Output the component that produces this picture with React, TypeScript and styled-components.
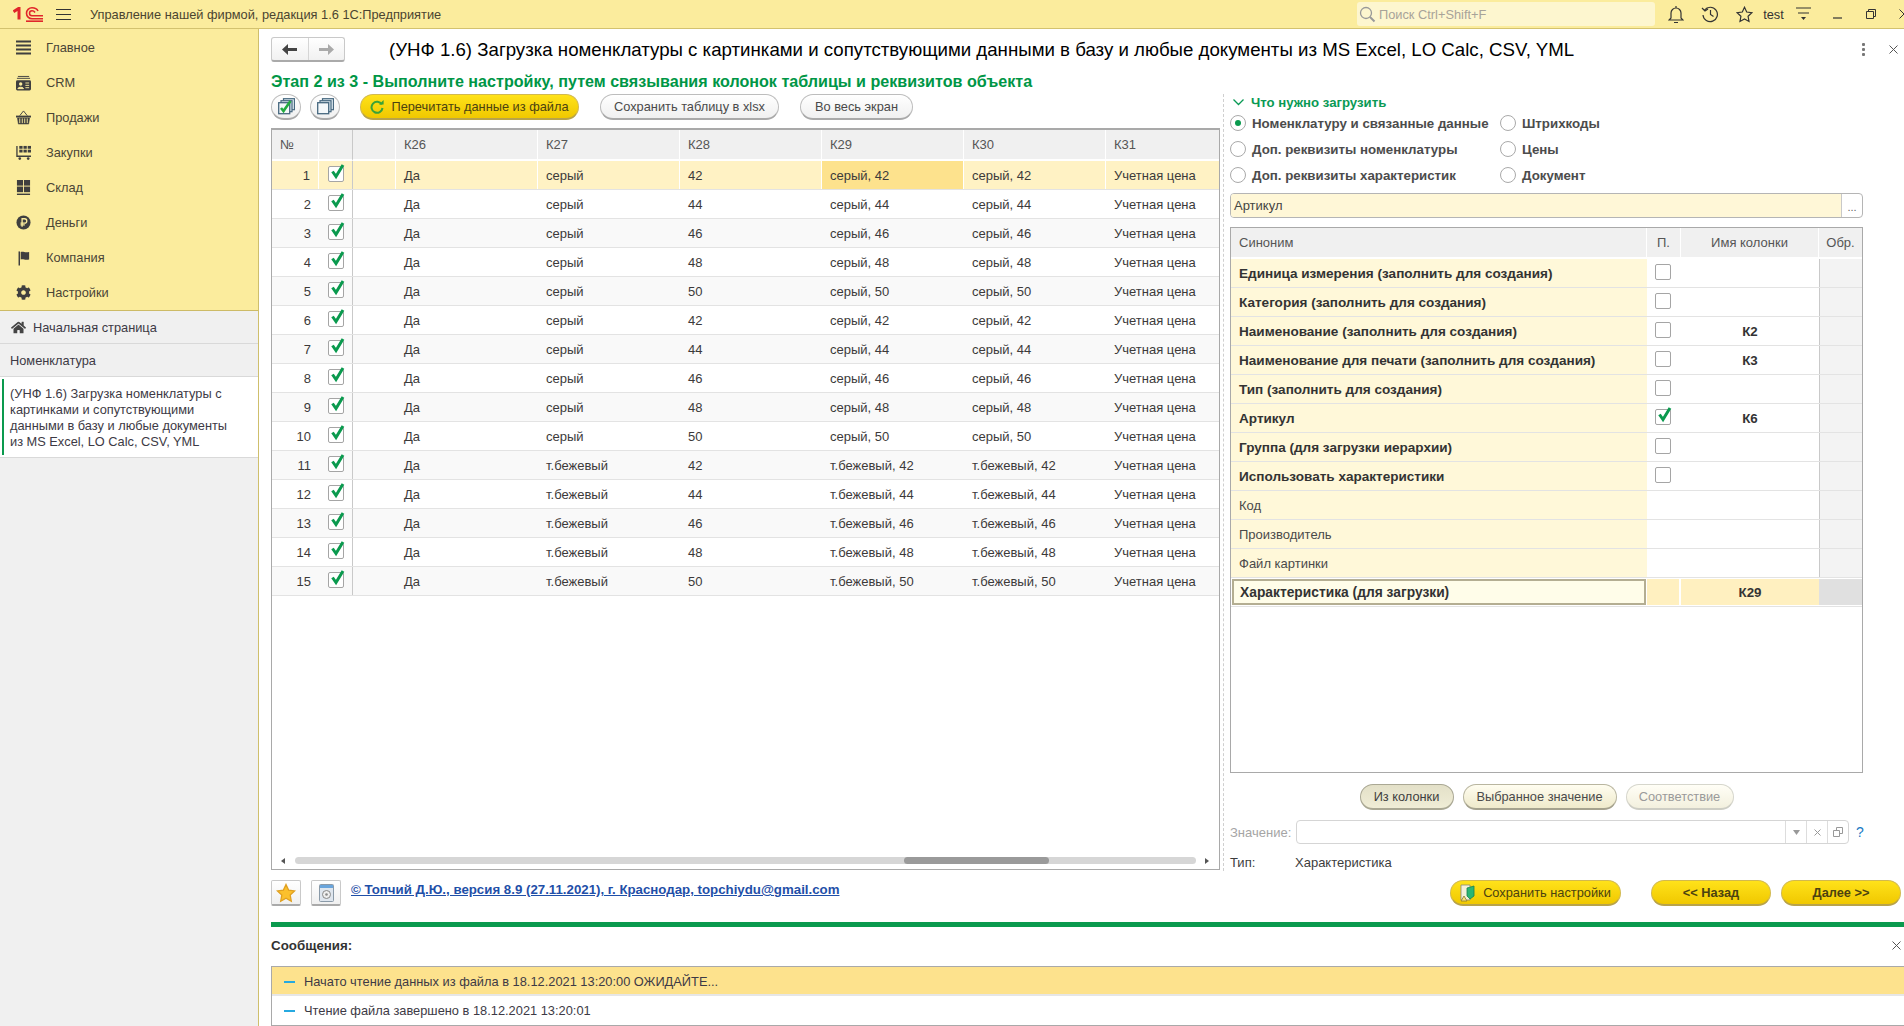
import React from "react";
import styled, { createGlobalStyle, css } from "styled-components";
import { FaHome, FaCog } from "react-icons/fa";

const Global = createGlobalStyle`
  html, body { margin: 0; padding: 0; background: #fff; }
  body { font-family: "Liberation Sans", Arial, sans-serif; font-size: 13px; color: #333; overflow: hidden; }
  * { box-sizing: border-box; }
`;

const Page = styled.div`
  width: 1904px; height: 1026px; display: flex; flex-direction: column; overflow: hidden;
`;
const TopBar = styled.header`
  height: 29px; flex: none; background: #fbec9d; border-bottom: 1px solid #d3c26f;
  display: flex; align-items: center; position: relative; font-size: 12.8px;
`;
const LogoBox = styled.div`
  width: 43px; margin-left: 13px; display: flex; align-items: center; flex: none;
`;
const Burger = styled.div`
  width: 15px; height: 11px; display: flex; flex-direction: column; justify-content: space-between;
  i { display: block; height: 1px; background: #333; }
`;
const AppTitle = styled.div`
  margin-left: 19px; color: #4a4430; white-space: nowrap;
`;
const Search = styled.div`
  margin-left: auto; width: 298px; height: 24px; background: #fdf6cf; border-radius: 3px; flex: none;
  display: flex; align-items: center; padding-left: 2px; color: #a8a399; gap: 3px; white-space: nowrap;
`;
const TopIcons = styled.div`
  display: flex; align-items: center; width: 249px; height: 28px; padding-left: 10px; flex: none;
`;
const TopIcon = styled.span<{ $w: number }>`
  width: ${(p) => p.$w}px; display: flex; justify-content: center; align-items: center; flex: none;
`;

const Body = styled.div`
  flex: 1; display: flex; min-height: 0;
`;
const Side = styled.aside`
  width: 259px; flex: none; background: #f0f0f0; border-right: 1px solid #cfbf6c; display: flex; flex-direction: column; font-size: 12.8px;
`;
const Nav = styled.nav`
  height: 282px; background: #fbec9d; border-bottom: 1px solid #cdbb66; padding-top: 1px;
`;
const NavItem = styled.div`
  height: 35px; display: flex; align-items: center; padding-left: 16px; gap: 15px; color: #4a4536;
  svg { flex: none; }
`;
const HomeRow = styled.div`
  height: 33px; display: flex; align-items: center; padding-left: 11px; gap: 7px; color: #3d3a45; border-bottom: 1px solid #d9d9d9;
`;
const PlainRow = styled.div`
  height: 33px; display: flex; align-items: center; padding-left: 10px; color: #3d3a45; border-bottom: 1px solid #d9d9d9;
`;
const ActiveRow = styled.div`
  height: 81px; background: #fff; border-bottom: 1px solid #d9d9d9; padding: 2px 20px 0 10px; position: relative;
  color: #3d3a45; line-height: 16px; display: flex; align-items: center;
  &::before { content: ""; position: absolute; left: 2px; top: 2px; bottom: 2px; width: 2px; background: #0a9a4e; }
`;

const Main = styled.main`
  flex: 1; min-width: 0; display: flex; flex-direction: column; padding-left: 12px;
`;
const Head = styled.div`
  height: 25px; margin-top: 8px; display: flex; align-items: center; flex: none;
`;
const NavPair = styled.div`
  width: 74px; height: 25px; display: flex; border: 1px solid #c9c9c9; border-bottom: 2px solid #aaa; border-radius: 3px;
  background: linear-gradient(#fff, #f1f1f1);
`;
const NavBtn = styled.div<{ $line?: boolean }>`
  flex: 1; display: flex; align-items: center; justify-content: center;
  ${(p) => p.$line && css`border-right: 1px solid #d5d5d5;`}
`;
const FormTitle = styled.h1`
  margin: 0 0 0 44px; font-weight: 400; font-size: 18.67px; color: #000; white-space: nowrap; line-height: 24px;
`;
const HeadRight = styled.div`
  margin-left: auto; display: flex; align-items: center; padding-right: 6px; gap: 24px;
`;
const Kebab = styled.div`
  display: flex; flex-direction: column; gap: 2px;
  i { width: 3px; height: 3px; background: #777; display: block; border-radius: 1px; }
`;
const Stage = styled.div`
  margin-top: 10px; height: 18px; line-height: 18px; font-size: 16.12px; font-weight: 700; color: #009646; white-space: nowrap; flex: none;
`;
const Work = styled.div`
  margin-top: 4px; height: 777px; display: flex; flex: none;
`;
const LeftCol = styled.section`
  width: 949px; flex: none; display: flex; flex-direction: column;
`;
const Toolbar = styled.div`
  height: 26px; display: flex; align-items: center; flex: none; margin-bottom: 8px;
`;
const Pill = styled.button<{ $kind?: "yellow" | "grey" | "cream" | "pressed" | "off"; $w?: number; $ml?: number }>`
  height: 26px; flex: none; border-radius: 13px; font: inherit; font-size: 12.8px; display: flex; align-items: center; justify-content: center; gap: 7px; padding: 0;
  width: ${(p) => (p.$w ? `${p.$w}px` : "auto")}; margin-left: ${(p) => p.$ml ?? 0}px;
  border: 1px solid #bdbdbd; border-bottom: 2px solid #a9a9a9; color: #4a4a4a;
  background: linear-gradient(#fff, #f0f0f0);
  ${(p) => p.$kind === "yellow" && css`
    border-color: #d2b94e; border-bottom-color: #b8a34a; color: #4b4210; background: linear-gradient(#ffe21a, #f0c800);
  `}
  ${(p) => p.$kind === "cream" && css`
    background: linear-gradient(#fffdf0, #efeacb); border-color: #b9b6a0; border-bottom-color: #a5a28e;
  `}
  ${(p) => p.$kind === "pressed" && css`
    background: linear-gradient(#e3e0c8, #f0edd6); border-color: #aaa894; color: #3e3e3e;
  `}
  ${(p) => p.$kind === "off" && css`
    background: linear-gradient(#fffef6, #f3f0de); border-color: #d6d6cc; border-bottom-color: #cdcdc4; color: #9a9a9a;
  `}
`;
const Grid = styled.div`
  height: 742px; flex: none; border: 1px solid #a9a9a9; border-top-width: 2px; position: relative; overflow: hidden; background: #fff;
`;
const cols = "47px 34px 43px repeat(6, 142px)";
const HeadRowEl = styled.div`
  display: grid; grid-template-columns: ${cols}; height: 31px;
`;
const HeadCell = styled.div<{ $sep?: boolean }>`
  background: #f0f0f0; border-right: 1px solid #fff; border-bottom: 2px solid #fff; padding: 0 8px; display: flex; align-items: center; color: #555;
  ${(p) => p.$sep && css`border-right: 1px solid #c9c9c9;`}
`;
const RowEl = styled.div<{ $alt?: boolean; $sel?: boolean }>`
  display: grid; grid-template-columns: ${cols}; height: 29px; border-bottom: 1px solid #e3e3e3;
  background: ${(p) => (p.$sel ? "#fff2c4" : p.$alt ? "#f9f9f9" : "#fff")};
`;
const Cell = styled.div<{ $right?: boolean; $sep?: boolean; $cur?: boolean; $sel?: boolean }>`
  padding: 0 8px; display: flex; align-items: center; color: #3c3a3a; white-space: nowrap; overflow: hidden;
  ${(p) => p.$right && css`justify-content: flex-end;`}
  ${(p) => p.$sel && css`border-right: 1px solid #fff;`}
  ${(p) => p.$sep && css`border-right: 1px solid #c9c9c9;`}
  ${(p) => p.$cur && css`background: #fde28d;`}
`;
const ChkCell = styled(Cell)`
  padding: 0 0 2px 9px; overflow: visible;
`;
const Box = styled.span`
  width: 16px; height: 16px; display: block; border: 1px solid #a5a5a5; border-radius: 2px; background: #fff; position: relative; flex: none;
  svg { position: absolute; left: 1px; top: -3px; overflow: visible; }
`;
const HScroll = styled.div`
  position: absolute; left: 0; right: 0; bottom: 0; height: 17px; display: flex; align-items: center; background: #fff;
`;
const Arrow = styled.span<{ $r?: boolean }>`
  width: 0; height: 0; border-top: 3px solid transparent; border-bottom: 3px solid transparent; flex: none;
  ${(p) => (p.$r ? css`border-left: 4px solid #555; margin: 0 10px 0 9px;` : css`border-right: 4px solid #555; margin: 0 10px 0 9px;`)}
`;
const Track = styled.div`
  flex: 1; height: 7px; background: #d6d6d6; border-radius: 4px; position: relative;
`;
const Thumb = styled.div`
  position: absolute; left: 609px; width: 145px; top: 0; bottom: 0; background: #9a9a9a; border-radius: 4px;
`;
const RightCol = styled.section`
  width: 640px; margin-left: 3px; flex: none; padding-left: 6px; border-left: 1px dashed #cfcfcf; display: flex; flex-direction: column;
`;
const Group = styled.div`
  height: 15px; line-height: 15px; margin-top: 1px; display: flex; align-items: center; gap: 7px; padding-left: 3px; color: #0a9a55; font-weight: 700; font-size: 13.2px; flex: none;
`;
const Radios = styled.div`
  display: grid; grid-template-columns: 270px 1fr; grid-auto-rows: 26px; flex: none;
`;
const RadioItem = styled.label`
  display: flex; align-items: center; gap: 6px; font-weight: 700; color: #4c4c4c; white-space: nowrap; font-size: 13.3px;
`;
const RadioDot = styled.span<{ $on?: boolean }>`
  width: 16px; height: 16px; border-radius: 50%; border: 1px solid #a9a9a9; background: #fff; flex: none; display: flex; align-items: center; justify-content: center;
  &::after { content: ""; width: 6px; height: 6px; border-radius: 50%; background: ${(p) => (p.$on ? "#0a9a4e" : "transparent")}; }
`;
const TextInput = styled.div`
  margin-top: 5px; height: 25px; width: 633px; display: flex; border: 1px solid #b5b5b5; border-radius: 4px; overflow: hidden; background: #fff; flex: none;
`;
const InputValue = styled.div`
  flex: 1; background: #fff7d7; padding-left: 3px; display: flex; align-items: center; color: #444;
`;
const InputBtn = styled.div`
  width: 21px; border-left: 1px solid #c9c9c9; display: flex; justify-content: center; align-items: flex-end; padding-bottom: 5px; color: #666; font-size: 11px; line-height: 10px;
`;
const SynTable = styled.div`
  margin-top: 9px; width: 633px; height: 546px; border: 1px solid #a9a9a9; flex: none; overflow: hidden;
`;
const synCols = "416px 34px 138px 44px";
const SynHead = styled.div`
  display: grid; grid-template-columns: ${synCols}; height: 31px;
`;
const SynHeadCell = styled.div<{ $center?: boolean }>`
  background: #f0f0f0; border-right: 1px solid #fff; border-bottom: 2px solid #fff; display: flex; align-items: center; color: #555;
  padding-left: ${(p) => (p.$center ? 0 : 8)}px; justify-content: ${(p) => (p.$center ? "center" : "flex-start")};
`;
const SynRowEl = styled.div`
  display: grid; grid-template-columns: ${synCols}; height: 29px; border-bottom: 1px solid #e3e3e3;
`;
const SynName = styled.div<{ $bold?: boolean }>`
  background: #fff8d9; padding-left: 8px; display: flex; align-items: center; white-space: nowrap; color: ${(p) => (p.$bold ? "#333" : "#4a4a4a")}; font-weight: ${(p) => (p.$bold ? 700 : 400)}; font-size: ${(p) => (p.$bold ? "13.55px" : "13px")};
`;
const SynCur = styled(SynName)`
  background: #fffde9; border: 2px solid #b4ae92; padding-left: 6px; margin: 1px 1px 1px 1px; font-weight: 700; font-size: 13.8px; color: #333;
`;
const SynChk = styled.div<{ $sel?: boolean }>`
  display: flex; align-items: center; padding: 0 0 2px 8px;
  ${(p) => p.$sel && css`background: #fff0c0; border-right: 2px solid #fff; margin: 1px 0;`}
`;
const SynCol = styled.div<{ $sel?: boolean }>`
  display: flex; align-items: center; justify-content: center; font-weight: 700; color: #333; font-size: 13.33px;
  ${(p) => p.$sel && css`background: #fff0c0; margin: 1px 0;`}
`;
const SynObr = styled.div<{ $sel?: boolean }>`
  background: ${(p) => (p.$sel ? "#e0e0e0" : "#f3f3f3")}; border-left: 1px solid #c9c9c9;
  ${(p) => p.$sel && css`margin: 1px 0; border-left: 0;`}
`;
const ModeRow = styled.div`
  margin-top: 11px; width: 633px; display: flex; justify-content: center; gap: 9px; flex: none;
`;
const ValueRow = styled.div`
  margin-top: 10px; height: 24px; display: flex; align-items: center; flex: none; color: #a5a5a5;
`;
const ValueLabel = styled.div`
  width: 66px; flex: none;
`;
const ValueField = styled.div`
  width: 553px; height: 24px; display: flex; border: 1px solid #d5d5d5; border-radius: 4px; flex: none;
`;
const ValueGrow = styled.div`flex: 1;`;
const ValueBtn = styled.div`
  width: 21px; border-left: 1px solid #ddd; display: flex; align-items: center; justify-content: center; color: #999;
`;
const Help = styled.div`
  margin-left: 7px; color: #1a7ac4; font-weight: 400; font-size: 14px;
`;
const TypeRow = styled.div`
  margin-top: 9px; height: 18px; display: flex; align-items: center; color: #3d3d3d; flex: none;
`;
const TypeLabel = styled.div`width: 65px; flex: none;`;
const Footer = styled.div`
  margin-top: 9px; height: 26px; display: flex; flex: none; position: relative; padding-right: 3px;
`;
const SquareBtn = styled.div<{ $ml?: number }>`
  width: 30px; height: 26px; flex: none; margin-left: ${(p) => p.$ml ?? 0}px; border: 1px solid #c9c9c9; border-bottom: 2px solid #aaa; border-radius: 2px;
  background: linear-gradient(#fff, #f0f0f0); display: flex; align-items: center; justify-content: center;
`;
const LinkText = styled.a`
  margin-left: 10px; color: #1f4fa8; font-weight: 700; font-size: 13.27px; text-decoration: underline; line-height: 20px; height: 20px; white-space: nowrap;
`;
const FooterRight = styled.div`
  margin-left: auto; display: flex; align-items: center;
`;
const GreenBar = styled.div`
  margin-top: 16px; height: 5px; background: #0a9a4e; flex: none;
`;
const MsgHead = styled.div`
  height: 39px; padding: 0 3px 3px 0; display: flex; align-items: center; justify-content: space-between; flex: none; font-weight: 700; color: #333; font-size: 13.33px;
`;
const MsgBox = styled.div`
  height: 60px; border: 1px solid #a9a9a9; border-right: 0; flex: none; font-size: 12.84px;
`;
const MsgRow = styled.div<{ $sel?: boolean }>`
  height: 29px; display: flex; align-items: center; padding-left: 12px; gap: 9px; color: #3d3a45;
  background: ${(p) => (p.$sel ? "#fde28d" : "#fff")};
  ${(p) => p.$sel && css`border-bottom: 2px solid #e6e6e6; padding-top: 2px;`}
  &::before { content: ""; width: 11px; height: 2px; background: #26a9e0; flex: none; }
`;

const Check = () => (
  <svg width="17" height="18" viewBox="0 0 17 18"><path d="M2.5 7.5 L6 12.5 L13 1" fill="none" stroke="#0a9a4e" strokeWidth="3" /></svg>
);

const ic = "#3f3f3f";
const navItems: [string, React.ReactNode][] = [
  ["Главное", <svg width="15" height="15" viewBox="0 0 15 15"><path d="M0 1.5h15M0 5.5h15M0 9.5h15M0 13.5h15" stroke={ic} strokeWidth="2" /></svg>],
  ["CRM", <svg width="15" height="16" viewBox="0 0 16 16"><path d="M2 1h12M1 3h14" stroke={ic} strokeWidth="1" /><rect x="0" y="5" width="16" height="11" rx="1.5" fill={ic} /><circle cx="5" cy="9" r="1.8" fill="#fbec9d" /><path d="M2 14c0-2 6-2 6 0zM10 8h4M10 10.5h4M10 13h4" fill="#fbec9d" stroke="#fbec9d" strokeWidth="1" /></svg>],
  ["Продажи", <svg width="15" height="15" viewBox="0 0 16 16"><path d="M4 6 L8 1 L12 6" fill="none" stroke={ic} /><rect x="0" y="6" width="16" height="2" fill={ic} /><path d="M1.5 8.5h13l-1 6.5h-11z" fill={ic} stroke={ic} strokeWidth=".5" /><path d="M4 9v5M6.7 9v5M9.3 9v5M12 9v5" stroke="#fbec9d" strokeWidth="1" /></svg>],
  ["Закупки", <svg width="15" height="15" viewBox="0 0 16 16"><path d="M1 1v11h15" fill="none" stroke={ic} strokeWidth="1.4" /><rect x="3.5" y="1" width="3.5" height="3" fill={ic} /><rect x="8" y="1" width="3.5" height="3" fill={ic} /><rect x="12.5" y="1" width="3.5" height="3" fill={ic} /><rect x="3.5" y="5" width="3.5" height="3" fill={ic} /><rect x="8" y="5" width="3.5" height="3" fill={ic} /><rect x="12.5" y="5" width="3.5" height="3" fill={ic} /><circle cx="4" cy="14.5" r="1.4" fill={ic} /><circle cx="13" cy="14.5" r="1.4" fill={ic} /></svg>],
  ["Склад", <svg width="15" height="15" viewBox="0 0 16 16"><rect x="1" y="0" width="6.5" height="6" fill={ic} /><rect x="8.5" y="0" width="6.5" height="6" fill={ic} /><rect x="1" y="7" width="6.5" height="6" fill={ic} /><rect x="8.5" y="7" width="6.5" height="6" fill={ic} /><rect x="1" y="14.5" width="14" height="1.5" fill={ic} /></svg>],
  ["Деньги", <svg width="15" height="15" viewBox="0 0 16 16"><circle cx="8" cy="8" r="7.5" fill={ic} /><path d="M6.5 12.5V4h2.7a2.3 2.3 0 0 1 0 4.6H4.8M4.8 10.6h4.6" fill="none" stroke="#fbec9d" strokeWidth="1.4" /></svg>],
  ["Компания", <svg width="15" height="16" viewBox="0 0 16 16"><path d="M3.5 1v15" stroke={ic} strokeWidth="1.6" /><path d="M5 1.5c3-1 4 1 9 0v8c-5 1-6-1-9 0z" fill={ic} /></svg>],
  ["Настройки", <FaCog size={15} color={ic} />],
];

const sizes = [42, 44, 46, 48, 50];
const rows = Array.from({ length: 15 }, (_, i) => ({
  n: i + 1,
  color: i < 10 ? "серый" : "т.бежевый",
  size: sizes[i % 5],
}));

const syn: { t: string; bold?: boolean; chk?: boolean; on?: boolean; col?: string }[] = [
  { t: "Единица измерения (заполнить для создания)", bold: true, chk: true },
  { t: "Категория (заполнить для создания)", bold: true, chk: true },
  { t: "Наименование (заполнить для создания)", bold: true, chk: true, col: "К2" },
  { t: "Наименование для печати (заполнить для создания)", bold: true, chk: true, col: "К3" },
  { t: "Тип (заполнить для создания)", bold: true, chk: true },
  { t: "Артикул", bold: true, chk: true, on: true, col: "К6" },
  { t: "Группа (для загрузки иерархии)", bold: true, chk: true },
  { t: "Использовать характеристики", bold: true, chk: true },
  { t: "Код" },
  { t: "Производитель" },
  { t: "Файл картинки" },
];

const Star = ({ filled }: { filled?: boolean }) => (
  <svg width="20" height="20" viewBox="0 0 20 20">
    <path d="M10 1.5l2.6 5.6 6 .8-4.4 4.2 1.1 6.1L10 15.2l-5.3 3 1.1-6.1L1.4 7.9l6-.8z" fill={filled ? "#fbc02d" : "none"} stroke={filled ? "#e0a020" : "#444"} strokeWidth="1.3" />
  </svg>
);

const Stack = ({ checked }: { checked?: boolean }) => (
  <svg width="17" height="17" viewBox="0 0 17 17">
    <rect x="5.5" y=".7" width="11" height="11" fill="#dce8f0" stroke="#47687f" strokeWidth="1.2" />
    <rect x="3" y="2.7" width="11" height="11" fill="#dce8f0" stroke="#47687f" strokeWidth="1.2" />
    <rect x=".7" y="4.7" width="11" height="11" fill="#f4f8fa" stroke="#47687f" strokeWidth="1.3" />
    {checked && <path d="M3 10l2.5 3L12.5 3" fill="none" stroke="#22ab3f" strokeWidth="2.6" />}
  </svg>
);

export default function App() {
  return (
    <Page>
      <Global />
      <TopBar>
        <LogoBox>
          <svg width="30" height="15" viewBox="0 0 30 15">
            <path d="M.5 4.8 L6 1.2 V12.5" fill="none" stroke="#e0262b" strokeWidth="3" />
            <path d="M25 4C24 1.8 21.5.8 19 .8a5.5 5.5 0 0 0 0 11H30" fill="none" stroke="#e0262b" strokeWidth="1.6" />
            <path d="M22 5.5C21.3 4.3 20 3.8 19 3.8a2.5 2.5 0 0 0 0 5H30" fill="none" stroke="#e0262b" strokeWidth="1.5" />
            <path d="M13 14.2H30" stroke="#e0262b" strokeWidth="1.6" />
          </svg>
        </LogoBox>
        <Burger><i /><i /><i /></Burger>
        <AppTitle>Управление нашей фирмой, редакция 1.6 1С:Предприятие</AppTitle>
        <Search>
          <svg width="17" height="17" viewBox="0 0 17 17"><circle cx="7" cy="7" r="5.5" fill="none" stroke="#999" strokeWidth="1.3" /><path d="M11 11l4.5 4.5" stroke="#999" strokeWidth="2" /></svg>
          Поиск Ctrl+Shift+F
        </Search>
        <TopIcons>
          <TopIcon $w={22}><svg width="16" height="19" viewBox="0 0 16 19"><path d="M3 13V8a5 5 0 0 1 10 0v5l2 2H1zM8 1v2M6 17.5h4" fill="none" stroke="#333" strokeWidth="1.2" /></svg></TopIcon>
          <TopIcon $w={12} />
          <TopIcon $w={22}><svg width="18" height="18" viewBox="0 0 18 18"><path d="M3.5 5a7.2 7.2 0 1 1-1.5 5M1 3l3 3 3-2M9.5 5v4.5l3 2" fill="none" stroke="#333" strokeWidth="1.2" /></svg></TopIcon>
          <TopIcon $w={12} />
          <TopIcon $w={22}><svg width="17" height="17" viewBox="0 0 20 20"><path d="M10 1.5l2.6 5.6 6 .8-4.4 4.2 1.1 6.1L10 15.2l-5.3 3 1.1-6.1L1.4 7.9l6-.8z" fill="none" stroke="#333" strokeWidth="1.4" /></svg></TopIcon>
          <TopIcon $w={37}>test</TopIcon>
          <TopIcon $w={22}><svg width="15" height="14" viewBox="0 0 15 14"><path d="M0 1h15M2 6h11" stroke="#333" strokeWidth="1.2" /><path d="M5 10h5l-2.5 3z" fill="#333" /></svg></TopIcon>
          <TopIcon $w={18} />
          <TopIcon $w={12}><svg width="10" height="10" viewBox="0 0 10 10"><path d="M0 9h9" stroke="#333" strokeWidth="1.2" /></svg></TopIcon>
          <TopIcon $w={21} />
          <TopIcon $w={12}><svg width="10" height="10" viewBox="0 0 10 10"><path d="M.5 2.5h7v7h-7zM2.5 2.5v-2h7v7h-2" fill="none" stroke="#333" /></svg></TopIcon>
          <TopIcon $w={22} />
          <TopIcon $w={10}><svg width="10" height="10" viewBox="0 0 10 10"><path d="M.5.5l9 9M9.5.5l-9 9" stroke="#333" /></svg></TopIcon>
        </TopIcons>
      </TopBar>
      <Body>
        <Side>
          <Nav>
            {navItems.map(([t, i]) => (
              <NavItem key={t}>{i}<span>{t}</span></NavItem>
            ))}
          </Nav>
          <HomeRow><FaHome size={15} color="#444" />Начальная страница</HomeRow>
          <PlainRow>Номенклатура</PlainRow>
          <ActiveRow>
            <span>(УНФ 1.6) Загрузка номенклатуры с картинками и сопутствующими данными в базу и любые документы из MS Excel, LO Calc, CSV, YML</span>
          </ActiveRow>
        </Side>
        <Main>
          <Head>
            <NavPair>
              <NavBtn $line><svg width="15" height="11" viewBox="0 0 15 11"><path d="M0 5.5L6 0v4h9v3H6v4z" fill="#444" /></svg></NavBtn>
              <NavBtn><svg width="15" height="11" viewBox="0 0 15 11"><path d="M15 5.5L9 0v4H0v3h9v4z" fill="#aaa" /></svg></NavBtn>
            </NavPair>
            <FormTitle>(УНФ 1.6) Загрузка номенклатуры с картинками и сопутствующими данными в базу и любые документы из MS Excel, LO Calc, CSV, YML</FormTitle>
            <HeadRight>
              <Kebab><i /><i /><i /></Kebab>
              <svg width="9" height="9" viewBox="0 0 9 9"><path d="M.5.5l8 8M8.5.5l-8 8" stroke="#555" /></svg>
            </HeadRight>
          </Head>
          <Stage>Этап 2 из 3 - Выполните настройку, путем связывания колонок таблицы и реквизитов объекта</Stage>
          <Work>
            <LeftCol>
              <Toolbar>
                <Pill $w={30}><Stack checked /></Pill>
                <Pill $w={30} $ml={9}><Stack /></Pill>
                <Pill $kind="yellow" $w={219} $ml={20}>
                  <svg width="14" height="14" viewBox="0 0 14 14"><path d="M11.8 4.5A5.5 5.5 0 1 0 12.5 8" fill="none" stroke="#3aa238" strokeWidth="2" /><path d="M9 4.6h4.6V0z" fill="#3aa238" /></svg>
                  Перечитать данные из файла
                </Pill>
                <Pill $w={179} $ml={21}>Сохранить таблицу в xlsx</Pill>
                <Pill $w={113} $ml={21}>Во весь экран</Pill>
              </Toolbar>
              <Grid>
                <HeadRowEl>
                  <HeadCell>№</HeadCell>
                  <HeadCell $sep />
                  <HeadCell />
                  {["К26", "К27", "К28", "К29", "К30", "К31"].map((h) => <HeadCell key={h}>{h}</HeadCell>)}
                </HeadRowEl>
                {rows.map((r, i) => {
                  const sel = i === 0;
                  const v = `${r.color}, ${r.size}`;
                  return (
                    <RowEl key={r.n} $sel={sel} $alt={i % 2 === 0}>
                      <Cell $right $sel={sel}>{r.n}</Cell>
                      <ChkCell $sep><Box><Check /></Box></ChkCell>
                      <Cell $sel={sel} />
                      <Cell $sel={sel}>Да</Cell>
                      <Cell $sel={sel}>{r.color}</Cell>
                      <Cell $sel={sel}>{r.size}</Cell>
                      <Cell $sel={sel} $cur={sel}>{v}</Cell>
                      <Cell $sel={sel}>{v}</Cell>
                      <Cell>Учетная цена</Cell>
                    </RowEl>
                  );
                })}
                <HScroll>
                  <Arrow />
                  <Track><Thumb /></Track>
                  <Arrow $r />
                </HScroll>
              </Grid>
            </LeftCol>
            <RightCol>
              <Group>
                <svg width="11" height="7" viewBox="0 0 11 7"><path d="M.5.5l5 5 5-5" fill="none" stroke="#0a9a55" strokeWidth="1.3" /></svg>
                Что нужно загрузить
              </Group>
              <Radios>
                <RadioItem><RadioDot $on />Номенклатуру и связанные данные</RadioItem>
                <RadioItem><RadioDot />Штрихкоды</RadioItem>
                <RadioItem><RadioDot />Доп. реквизиты номенклатуры</RadioItem>
                <RadioItem><RadioDot />Цены</RadioItem>
                <RadioItem><RadioDot />Доп. реквизиты характеристик</RadioItem>
                <RadioItem><RadioDot />Документ</RadioItem>
              </Radios>
              <TextInput>
                <InputValue>Артикул</InputValue>
                <InputBtn>...</InputBtn>
              </TextInput>
              <SynTable>
                <SynHead>
                  <SynHeadCell>Синоним</SynHeadCell>
                  <SynHeadCell $center>П.</SynHeadCell>
                  <SynHeadCell $center>Имя колонки</SynHeadCell>
                  <SynHeadCell $center>Обр.</SynHeadCell>
                </SynHead>
                {syn.map((s) => (
                  <SynRowEl key={s.t}>
                    <SynName $bold={s.bold}>{s.t}</SynName>
                    <SynChk>{s.chk && <Box>{s.on && <Check />}</Box>}</SynChk>
                    <SynCol>{s.col}</SynCol>
                    <SynObr />
                  </SynRowEl>
                ))}
                <SynRowEl>
                  <SynCur>Характеристика (для загрузки)</SynCur>
                  <SynChk $sel />
                  <SynCol $sel>К29</SynCol>
                  <SynObr $sel />
                </SynRowEl>
              </SynTable>
              <ModeRow>
                <Pill $kind="pressed" $w={94}>Из колонки</Pill>
                <Pill $kind="cream" $w={154}>Выбранное значение</Pill>
                <Pill $kind="off" $w={108}>Соответствие</Pill>
              </ModeRow>
              <ValueRow>
                <ValueLabel>Значение:</ValueLabel>
                <ValueField>
                  <ValueGrow />
                  <ValueBtn><svg width="7" height="5" viewBox="0 0 7 5"><path d="M0 0h7L3.5 5z" fill="#999" /></svg></ValueBtn>
                  <ValueBtn><svg width="7" height="7" viewBox="0 0 7 7"><path d="M.5.5l6 6M6.5.5l-6 6" stroke="#999" /></svg></ValueBtn>
                  <ValueBtn><svg width="10" height="10" viewBox="0 0 10 10"><path d="M.5 3.5h6v6h-6zM3.5 3V.5h6v6H7" fill="none" stroke="#999" /></svg></ValueBtn>
                </ValueField>
                <Help>?</Help>
              </ValueRow>
              <TypeRow><TypeLabel>Тип:</TypeLabel>Характеристика</TypeRow>
            </RightCol>
          </Work>
          <Footer>
            <SquareBtn><Star filled /></SquareBtn>
            <SquareBtn $ml={10}>
              <svg width="15" height="18" viewBox="0 0 15 18"><rect x=".5" y=".5" width="14" height="17" rx="1" fill="#dfe6ee" stroke="#8a9aa8" /><rect x="1" y="1" width="13" height="3" fill="#6aa5dc" /><circle cx="7.5" cy="10.5" r="4" fill="#eee" stroke="#888" /><circle cx="7.5" cy="10.5" r="1.3" fill="#888" /></svg>
            </SquareBtn>
            <LinkText>© Топчий Д.Ю., версия 8.9 (27.11.2021), г. Краснодар, topchiydu@gmail.com</LinkText>
            <FooterRight>
              <Pill $kind="yellow" $w={171}>
                <svg width="16" height="18" viewBox="0 0 16 18"><path d="M1 1h9v15H1z" fill="#f4f0d8" stroke="#887" strokeWidth=".8" /><path d="M7 4l7-2v10l-4 3-3-3z" fill="#2bb673" stroke="#17824f" strokeWidth=".8" /><path d="M1 17l3-5 3 5z" fill="#f6e27a" stroke="#8a7a30" strokeWidth=".8" /></svg>
                Сохранить настройки
              </Pill>
              <Pill $kind="yellow" $w={120} $ml={30}><b>&lt;&lt; Назад</b></Pill>
              <Pill $kind="yellow" $w={120} $ml={10}><b>Далее &gt;&gt;</b></Pill>
            </FooterRight>
          </Footer>
          <GreenBar />
          <MsgHead>
            Сообщения:
            <svg width="9" height="9" viewBox="0 0 9 9"><path d="M.5.5l8 8M8.5.5l-8 8" stroke="#555" /></svg>
          </MsgHead>
          <MsgBox>
            <MsgRow $sel>Начато чтение данных из файла в 18.12.2021 13:20:00 ОЖИДАЙТЕ...</MsgRow>
            <MsgRow>Чтение файла завершено в 18.12.2021 13:20:01</MsgRow>
          </MsgBox>
        </Main>
      </Body>
    </Page>
  );
}
